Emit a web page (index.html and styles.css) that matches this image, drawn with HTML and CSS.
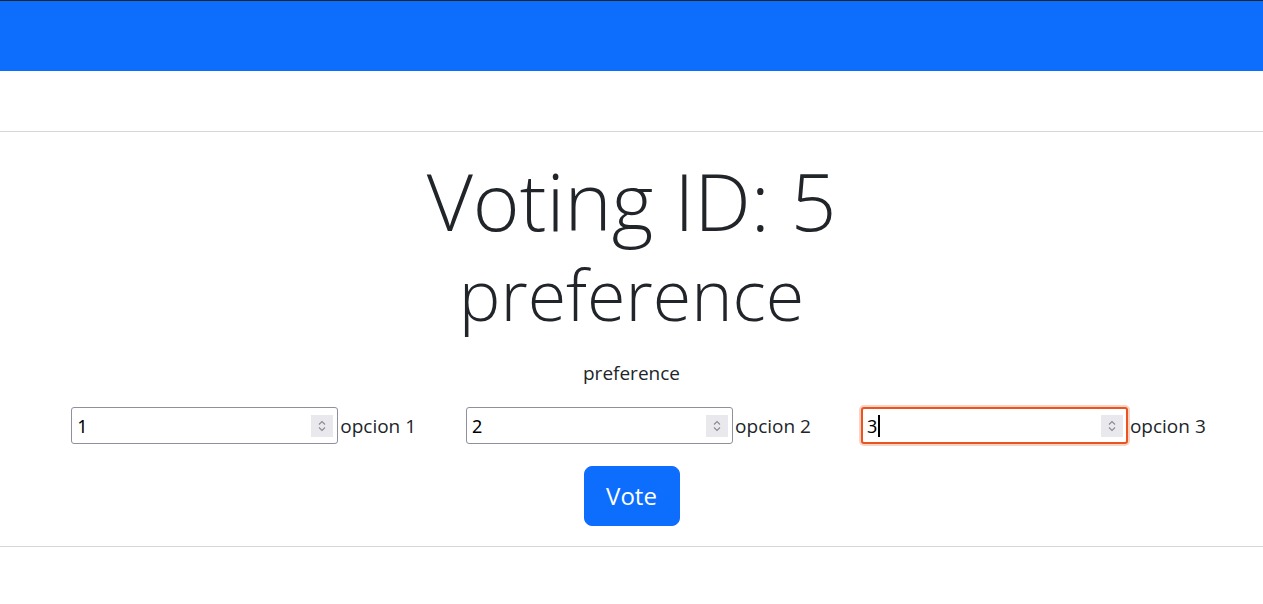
FILE: index.html
```html
<!DOCTYPE html>
<html lang="es">
<head>
<meta charset="utf-8">
<title>Voting</title>
<link rel="stylesheet" href="styles.css">
</head>
<body>
<nav class="navbar"></nav>
<div class="spacer"></div>
<hr class="rule">
<main class="voting">
  <h1 class="title">Voting ID: 5</h1>
  <h2 class="subtitle">preference</h2>
  <p class="question">preference</p>
  <div class="options">
    <div class="option">
      <div class="num"><span class="val">1</span><span class="spin"><svg viewBox="0 0 10 16" width="10" height="16"><path d="M2 6.5 L5 3.5 L8 6.5 M2 9.5 L5 12.5 L8 9.5" fill="none" stroke="#8a8a95" stroke-width="1.1"/></svg></span></div>
      <span class="label">opcion 1</span>
    </div>
    <div class="option">
      <div class="num"><span class="val">2</span><span class="spin"><svg viewBox="0 0 10 16" width="10" height="16"><path d="M2 6.5 L5 3.5 L8 6.5 M2 9.5 L5 12.5 L8 9.5" fill="none" stroke="#8a8a95" stroke-width="1.1"/></svg></span></div>
      <span class="label">opcion 2</span>
    </div>
    <div class="option">
      <div class="num focus"><span class="val">3<span class="caret"></span></span><span class="spin"><svg viewBox="0 0 10 16" width="10" height="16"><path d="M2 6.5 L5 3.5 L8 6.5 M2 9.5 L5 12.5 L8 9.5" fill="none" stroke="#8a8a95" stroke-width="1.1"/></svg></span></div>
      <span class="label">opcion 3</span>
    </div>
  </div>
  <div class="actions"><button class="vote">Vote</button></div>
</main>
<hr class="rule">
</body>
</html>
```
FILE: styles.css
```css
* { box-sizing: border-box; }
html, body { margin: 0; padding: 0; }
body {
  font-family: "Open Sans", "Noto Sans", sans-serif;
  color: #212529;
  background: #fff;
  font-size: 16px;
}
.navbar {
  height: 71px;
  background: #0d6efd;
  border-top: 1px solid #212529;
}
.spacer { height: 60px; }
.rule {
  margin: 0;
  border: 0;
  border-top: 1px solid #d6d7d8;
  height: 0;
}
.voting {
  display: flex;
  flex-direction: column;
  align-items: center;
  padding-top: 20px;
  padding-bottom: 20px;
}
.title {
  margin: 0;
  font-weight: 300;
  font-size: 80px;
  line-height: 1.2;
}
.subtitle {
  margin: 4px 0 0 0;
  font-weight: 300;
  font-size: 70px;
  line-height: 1.2;
}
.question {
  margin: 25px 0 0 0;
  font-size: 19px;
  line-height: 24px;
}
.options {
  display: flex;
  gap: 50px;
  margin-top: 22px;
  margin-left: 14px;
}
.option {
  display: flex;
  align-items: center;
}
.num {
  width: 267px;
  height: 37px;
  border: 1px solid #8f8f9d;
  border-radius: 3px;
  display: flex;
  align-items: center;
  justify-content: space-between;
  padding: 0 4px 0 5px;
  font-family: "Noto Sans", "DejaVu Sans", sans-serif;
  font-size: 18px;
  color: #000;
  background: #fff;
}
.num.focus {
  border: 2px solid #e9541f;
  box-shadow: 0 0 0 2px #fbd3c6;
  padding-left: 4px;
  padding-right: 3px;
}
.val { display: flex; align-items: center; }
.caret {
  display: inline-block;
  width: 2px;
  height: 22px;
  background: #000;
  margin-left: 1px;
}
.spin {
  width: 22px;
  height: 22px;
  background: #e9e9ed;
  display: flex;
  align-items: center;
  justify-content: center;
}
.label {
  margin-left: 2px;
  font-size: 19px;
}
.actions {
  margin-top: 22px;
}
.vote {
  font-family: "Open Sans", "Noto Sans", sans-serif;
  background: #0d6efd;
  color: #fff;
  border: 1px solid #0d6efd;
  border-radius: 8px;
  font-size: 24px;
  line-height: 33px;
  padding: 12px 10px 13px;
  width: 96px;
}
```
